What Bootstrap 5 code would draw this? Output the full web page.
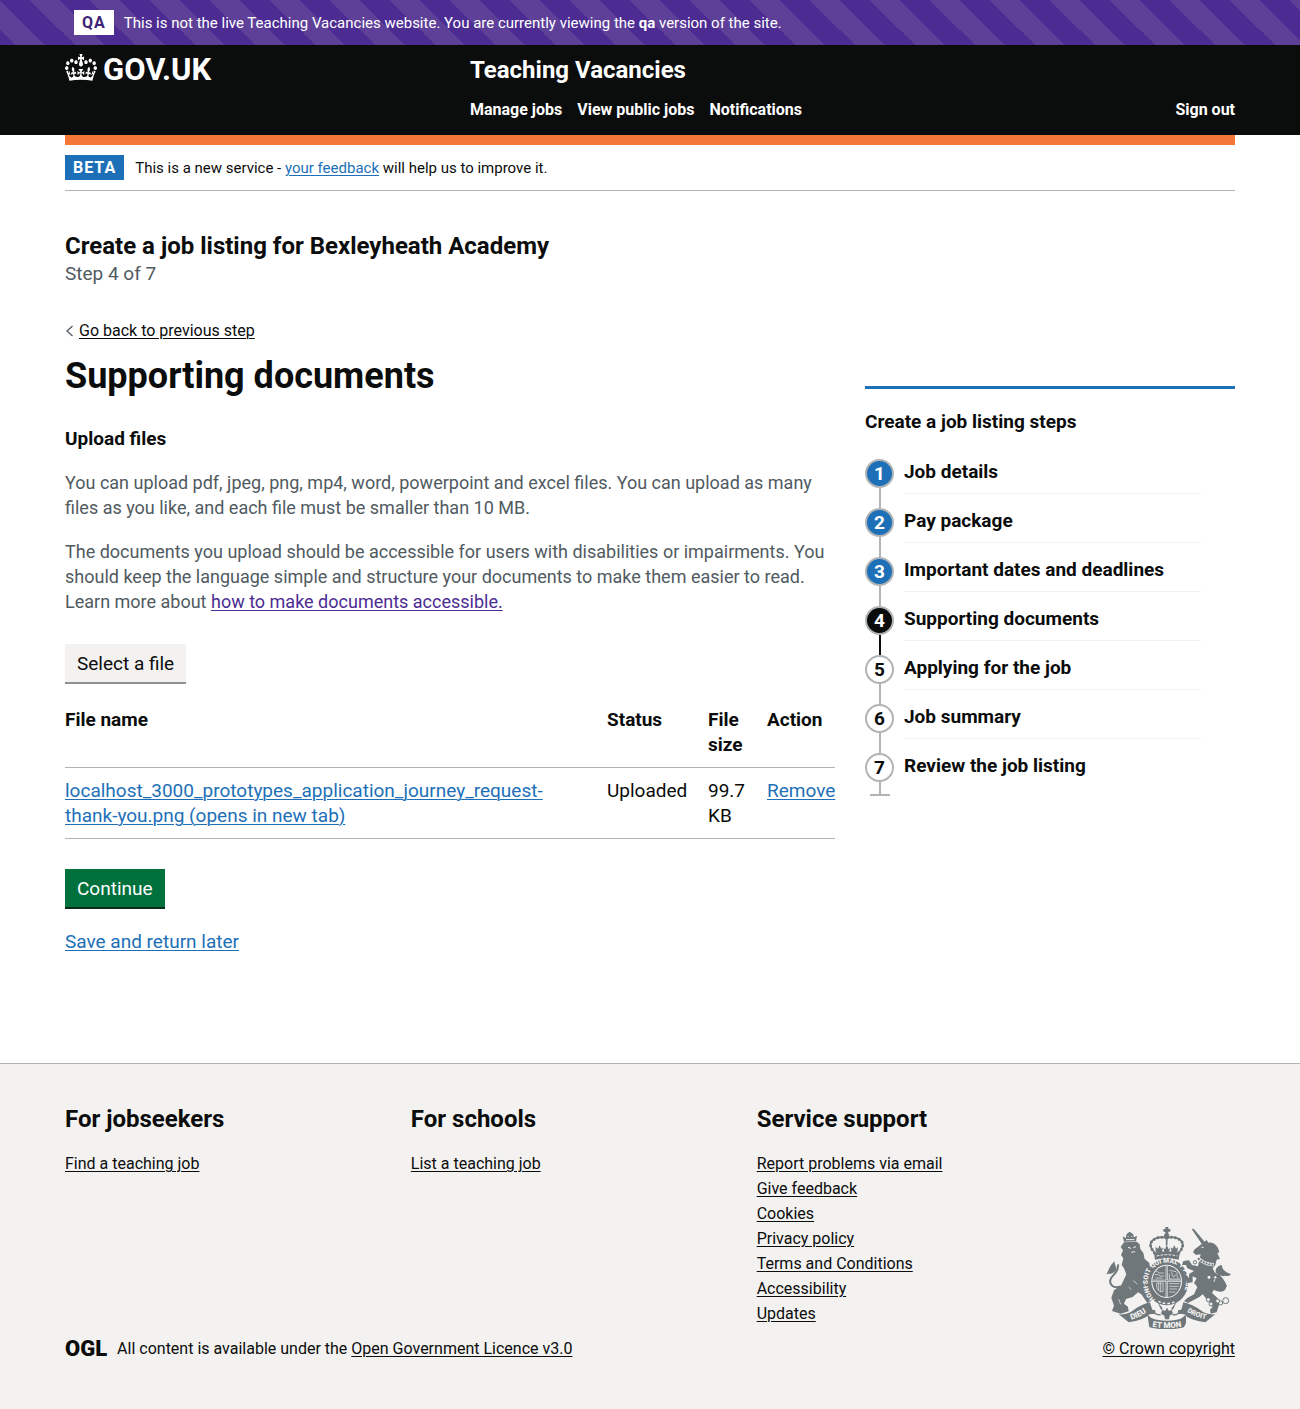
<!DOCTYPE html>
<html lang="en">
<head>
<meta charset="utf-8">
<meta name="viewport" content="width=device-width, initial-scale=1">
<title>Supporting documents - Teaching Vacancies</title>
<link href="https://cdn.jsdelivr.net/npm/bootstrap@5.3.0/dist/css/bootstrap.min.css" rel="stylesheet">
<style>
  :root { --ink: #0b0c0c; --blue: #1d70b8; --grey: #505a5f; --line: #b1b4b6; --pale: #f3f2f1; }
  body { font-family: Roboto, "Liberation Sans", sans-serif; font-size: 19px; line-height: 25px; color: var(--ink); }
  h1, h2, h3, p, ul, ol { margin: 0; }
  a { color: var(--blue); text-decoration-thickness: 1px; text-underline-offset: 2px; }
  .text-15 { font-size: 15px; line-height: 20px; }
  .text-16 { font-size: 16px; line-height: 20px; }
  .page-width { max-width: 1200px; padding-left: 15px; padding-right: 15px; }
  .head-m { font-size: 24px; line-height: 30px; font-weight: 700; }
  .head-s { font-size: 19px; line-height: 25px; font-weight: 700; }
  .head-l { font-size: 36px; line-height: 40px; font-weight: 700; margin: 15px 0 30px; }
  .grey-text { color: var(--grey); }
  .hint { color: var(--grey); font-size: 18px; margin-top: 19px; }
  .ink-link { color: var(--ink); }
  .seen-link { color: #4c2c92; }

  .env-banner { background: linear-gradient(45deg, #4c2c92 25%, #5e4099 25% 50%, #4c2c92 50% 75%, #5e4099 75%) 0 0 / 60px 60px; color: #fff; padding: 10px 0; }
  .env-banner .page-width { padding-left: 24px; gap: 10px; }
  .phase-tag { font-size: 16px; line-height: 25px; padding: 0 8px; font-weight: 700; background: var(--blue); color: #fff; letter-spacing: 1px; }
  .env-banner .phase-tag { background: #fff; color: #3d2375; }

  .site-head { background: var(--ink); height: 90px; }
  .site-head a { color: #fff; text-decoration: none; }
  .brand { font-size: 31px; line-height: 32px; font-weight: 700; gap: 6px; margin-top: 9px; }
  .head-side { padding-left: 15px; padding-top: 10px; }
  .head-side ul { gap: 15px; margin-top: 15px; font-size: 16px; font-weight: 700; line-height: 20px; }
  .brand-bar { height: 10px; background: #f47738; }
  .phase-row { gap: 11px; padding: 10px 0; border-bottom: 1px solid var(--line); }

  .intro { padding-top: 40px; margin-bottom: 35px; }
  .split { --bs-gutter-x: 30px; }
  .gov-btn { border: 0; border-bottom: 2px solid #929191; background: var(--pale); color: var(--ink); padding: 7px 12px 6px; line-height: 25px; display: block; }
  .gov-btn-go { background: #00703c; border-color: #002d18; color: #fff; }
  .pick-file { margin-top: 30px; margin-bottom: 13px; }
  .files { width: 100%; table-layout: fixed; margin-bottom: 30px; }
  .files th, .files td { padding: 10px 20px 10px 0; vertical-align: top; border-bottom: 1px solid var(--line); }
  .files th:last-child, .files td:last-child { padding-right: 0; }
  .w-status { width: 101px; } .w-size { width: 59px; } .w-action { width: 68px; }
  .files td:first-child { padding-right: 60px; }
  .save-link { margin: 20px 0 109px; }

  .steps { margin-top: 65px; border-top: 3px solid var(--blue); padding-top: 20px; }
  .steps ol { margin-top: 25px; }
  .step-item { gap: 10px; height: 49px; font-weight: 700; }
  .step-mark { width: 29px; }
  .step-num { width: 29px; height: 29px; line-height: 25px; border: 2px solid var(--line); border-radius: 50%; text-align: center; flex: none; background: #fff; }
  .step-done .step-num { background: var(--blue); color: #fff; }
  .step-now .step-num { background: var(--ink); color: #fff; }
  .step-stem { width: 2px; flex: 1; background: var(--line); }
  .step-now .step-stem { background: var(--ink); }
  .step-name { height: 35px; border-bottom: 1px solid var(--pale); margin-right: 34px; }
  .step-item:last-child { height: 43px; }
  .step-item:last-child .step-name { border: 0; }
  .step-foot { width: 20px; height: 2px; background: var(--line); }

  .site-foot { background: var(--pale); border-top: 1px solid var(--line); padding: 40px 0 50px; }
  .foot-row { gap: 30px; }
  .foot-nav { display: grid; grid-template-columns: repeat(3, 1fr); gap: 30px; }
  .foot-nav ul { margin-top: 20px; display: grid; gap: 5px; }
  .licence { gap: 10px; margin-top: 15px; }
  .ogl-mark { font-weight: 900; font-size: 22px; line-height: 20px; }
  .arms { margin-bottom: 10px; }
</style>
</head>
<body>
<div class="env-banner">
  <div class="container-fluid page-width d-flex align-items-center">
    <strong class="phase-tag">QA</strong>
    <span class="text-15">This is not the live Teaching Vacancies website. You are currently viewing the <strong>qa</strong> version of the site.</span>
  </div>
</div>

<header class="site-head">
  <div class="container-fluid page-width d-flex">
    <div class="col-4 p-0">
      <a href="#" class="brand d-inline-flex" aria-label="GOV.UK">
        <svg width="32" height="27" viewBox="0 0 132 97" preserveAspectRatio="none" fill="#fff" aria-hidden="true"><path d="M25 30.2c3.5 1.5 7.7-.2 9.1-3.7 1.5-3.6-.2-7.8-3.9-9.2-3.6-1.4-7.6.3-9.1 3.9-1.4 3.5.3 7.5 3.9 9zM9 39.5c3.6 1.5 7.8-.2 9.2-3.7 1.5-3.6-.2-7.8-3.9-9.1-3.6-1.5-7.6.2-9.1 3.8-1.4 3.5.3 7.5 3.8 9zM4.4 57.2c3.5 1.5 7.7-.2 9.1-3.8 1.5-3.6-.2-7.7-3.9-9.1-3.5-1.5-7.6.3-9.1 3.8-1.4 3.5.3 7.6 3.9 9.1zm38.3-21.4c3.5 1.5 7.7-.2 9.1-3.8 1.5-3.6-.2-7.7-3.9-9.1-3.6-1.5-7.6.3-9.1 3.8-1.3 3.6.4 7.7 3.9 9.1zm64.4-5.6c-3.6 1.5-7.8-.2-9.1-3.7-1.5-3.6.2-7.8 3.8-9.2 3.6-1.4 7.7.3 9.2 3.9 1.3 3.5-.4 7.5-3.9 9zm15.9 9.3c-3.6 1.5-7.7-.2-9.1-3.7-1.5-3.6.2-7.8 3.7-9.1 3.6-1.5 7.7.2 9.2 3.8 1.5 3.5-.3 7.5-3.8 9zm4.7 17.7c-3.6 1.5-7.8-.2-9.2-3.8-1.5-3.6.2-7.7 3.9-9.1 3.6-1.5 7.7.3 9.2 3.8 1.3 3.5-.4 7.6-3.9 9.1zM89.3 35.8c-3.6 1.5-7.8-.2-9.2-3.8-1.4-3.6.2-7.7 3.9-9.1 3.6-1.5 7.7.3 9.2 3.8 1.4 3.6-.3 7.7-3.9 9.1zM69.7 17.7l8.9 4.7V9.3l-8.9 2.8c-.2-.3-.5-.6-.9-.9L72.4 0H59.6l3.5 11.2c-.3.3-.6.5-.9.9l-8.8-2.8v13.1l8.8-4.7c.3.3.6.7.9.9l-5 15.4v.1c-.2.8-.4 1.6-.4 2.4 0 4.1 3.1 7.5 7 8.1h.2c.3 0 .7.1 1 .1.4 0 .7 0 1-.1h.2c4-.6 7.1-4.1 7.1-8.1 0-.8-.1-1.7-.4-2.4V34l-5.1-15.4c.4-.2.7-.6 1-.9zM66 92.8c16.9 0 32.8 1.1 47.1 3.2 4-16.9 8.9-26.7 14-33.5l-9.6-3.4c1 4.9 1.1 7.2 0 10.2-1.5-1.4-3-4.3-4.2-8.7L108.6 76c2.8-2 5-3.2 7.5-3.3-4.4 9.4-10 11.9-13.6 11.2-4.3-.8-6.3-4.6-5.6-7.9 1-4.7 5.7-5.9 8-.5 4.3-8.7-3-11.4-7.6-8.8 7.1-7.2 7.9-13.5 2.1-21.1-8 6.1-8.1 12.3-4.5 20.8-4.7-5.4-12.1-2.5-9.5 6.2 3.4-5.2 7.9-2 7.2 3.1-.6 4.3-6.4 7.8-13.5 7.2-10.3-.9-10.9-8-11.2-13.8 2.5-.5 7.1 1.8 11 7.3L80.2 60c-4.1 4.4-8 5.3-12.3 5.4 1.4-4.4 8-11.6 8-11.6H55.5s6.4 7.2 7.9 11.6c-4.2-.1-8-1-12.3-5.4l1.4 16.4c3.9-5.5 8.5-7.7 10.9-7.3-.3 5.8-.9 12.8-11.1 13.8-7.2.6-12.9-2.9-13.5-7.2-.7-5 3.8-8.3 7.1-3.1 2.7-8.7-4.6-11.6-9.4-6.2 3.7-8.5 3.6-14.7-4.6-20.8-5.8 7.6-5 13.9 2.2 21.1-4.7-2.6-11.9.1-7.7 8.8 2.3-5.5 7.1-4.2 8.1.5.7 3.3-1.3 7.1-5.7 7.900-3.5.7-9-1.8-13.5-11.2 2.5.1 4.7 1.3 7.5 3.3l-4.7-15.4c-1.2 4.4-2.7 7.2-4.3 8.7-1.1-3-.9-5.3 0-10.2l-9.5 3.4c5 6.9 9.900 16.7 14 33.5 14.8-2.1 30.8-3.2 47.7-3.2z"/></svg>
        <span>GOV.UK</span>
      </a>
    </div>
    <div class="col-8 head-side">
      <a href="#" class="head-m d-block">Teaching Vacancies</a>
      <nav aria-label="Account">
        <ul class="list-unstyled d-flex">
          <li><a href="#">Manage jobs</a></li>
          <li><a href="#">View public jobs</a></li>
          <li><a href="#">Notifications</a></li>
          <li class="ms-auto"><a href="#">Sign out</a></li>
        </ul>
      </nav>
    </div>
  </div>
</header>

<div class="container-fluid page-width">
  <div class="brand-bar"></div>
  <div class="phase-row d-flex align-items-center">
    <strong class="phase-tag">BETA</strong>
    <span class="text-15">This is a new service - <a href="#">your feedback</a> will help us to improve it.</span>
  </div>

  <main>
    <div class="intro">
      <h2 class="head-m">Create a job listing for Bexleyheath Academy</h2>
      <p class="grey-text">Step 4 of 7</p>
    </div>
    <div class="row split">
      <div class="col-8">
        <div class="text-16 d-flex align-items-center">
          <svg class="me-1" width="10" height="12" viewBox="0 0 10 12" fill="none" stroke="#505a5f" stroke-width="1.3" aria-hidden="true"><path d="M7.500 1 2 6l5.500 5"/></svg>
          <a href="#" class="ink-link">Go back to previous step</a>
        </div>
        <h1 class="head-l">Supporting documents</h1>
        <h2 class="head-s">Upload files</h2>
        <p class="hint">You can upload pdf, jpeg, png, mp4, word, powerpoint and excel files. You can upload as many files as you like, and each file must be smaller than 10 MB.</p>
        <p class="hint">The documents you upload should be accessible for users with disabilities or impairments. You should keep the language simple and structure your documents to make them easier to read. Learn more about <a href="#" class="seen-link">how to make documents accessible.</a></p>
        <button type="button" class="gov-btn pick-file">Select a file</button>
        <table class="files">
          <thead>
            <tr><th scope="col">File name</th><th scope="col" class="w-status">Status</th><th scope="col" class="w-size">File size</th><th scope="col" class="w-action">Action</th></tr>
          </thead>
          <tbody>
            <tr><td><a href="#">localhost_3000_prototypes_application_journey_request-<wbr>thank-you.png (opens in new tab)</a></td><td>Uploaded</td><td>99.7 KB</td><td><a href="#">Remove</a></td></tr>
          </tbody>
        </table>
        <button type="submit" class="gov-btn gov-btn-go">Continue</button>
        <p class="save-link"><a href="#">Save and return later</a></p>
      </div>
      <div class="col-4">
        <aside class="steps">
          <h2 class="head-s">Create a job listing steps</h2>
          <ol class="list-unstyled">
            <li class="step-item step-done d-flex"><div class="step-mark d-flex flex-column align-items-center"><span class="step-num">1</span><span class="step-stem"></span></div><div class="step-name flex-fill">Job details</div></li>
            <li class="step-item step-done d-flex"><div class="step-mark d-flex flex-column align-items-center"><span class="step-num">2</span><span class="step-stem"></span></div><div class="step-name flex-fill">Pay package</div></li>
            <li class="step-item step-done d-flex"><div class="step-mark d-flex flex-column align-items-center"><span class="step-num">3</span><span class="step-stem"></span></div><div class="step-name flex-fill">Important dates and deadlines</div></li>
            <li class="step-item step-now d-flex"><div class="step-mark d-flex flex-column align-items-center"><span class="step-num">4</span><span class="step-stem"></span></div><div class="step-name flex-fill">Supporting documents</div></li>
            <li class="step-item d-flex"><div class="step-mark d-flex flex-column align-items-center"><span class="step-num">5</span><span class="step-stem"></span></div><div class="step-name flex-fill">Applying for the job</div></li>
            <li class="step-item d-flex"><div class="step-mark d-flex flex-column align-items-center"><span class="step-num">6</span><span class="step-stem"></span></div><div class="step-name flex-fill">Job summary</div></li>
            <li class="step-item d-flex"><div class="step-mark d-flex flex-column align-items-center"><span class="step-num">7</span><span class="step-stem"></span><span class="step-foot"></span></div><div class="step-name flex-fill">Review the job listing</div></li>
          </ol>
        </aside>
      </div>
    </div>
  </main>
</div>

<footer class="site-foot">
  <div class="container-fluid page-width d-flex align-items-end foot-row">
    <div class="flex-fill">
      <div class="foot-nav">
        <div><h2 class="head-m">For jobseekers</h2>
          <ul class="list-unstyled text-16"><li><a href="#" class="ink-link">Find a teaching job</a></li></ul></div>
        <div><h2 class="head-m">For schools</h2>
          <ul class="list-unstyled text-16"><li><a href="#" class="ink-link">List a teaching job</a></li></ul></div>
        <div><h2 class="head-m">Service support</h2>
          <ul class="list-unstyled text-16">
            <li><a href="#" class="ink-link">Report problems via email</a></li>
            <li><a href="#" class="ink-link">Give feedback</a></li>
            <li><a href="#" class="ink-link">Cookies</a></li>
            <li><a href="#" class="ink-link">Privacy policy</a></li>
            <li><a href="#" class="ink-link">Terms and Conditions</a></li>
            <li><a href="#" class="ink-link">Accessibility</a></li>
            <li><a href="#" class="ink-link">Updates</a></li>
          </ul></div>
      </div>
      <div class="licence d-flex align-items-center text-16">
        <span class="ogl-mark">OGL</span>
        <span>All content is available under the <a href="#" class="ink-link">Open Government Licence v3.0</a></span>
      </div>
    </div>
    <a href="#" class="ink-link text-16 text-center text-nowrap">
      <svg class="arms d-block mx-auto" width="125" height="102" viewBox="36 36 375 306" fill="#6f777b" aria-hidden="true">
        <defs>
          <path id="garter" d="M184 254C156 232 154 180 178 158C200 138 238 138 260 158C284 182 280 232 252 254"/>
          <path id="scroll-l" d="M104 316Q136 310 164 287"/>
          <path id="scroll-m" d="M168 334Q219 344 270 334"/>
          <path id="scroll-r" d="M272 285Q302 308 344 314"/>
        </defs>
        <!-- lion -->
        <path d="M90 82L128 80L137 88L139 102L148 114L152 132L166 144L170 168L158 174L154 182L162 194L180 205L172 216L151 208L154 220L170 232L176 254L160 264L142 238L132 232L116 246L96 252L90 266L102 275L104 289L80 296L54 288L60 272L52 248L60 226L82 210L97 178L90 160L83 150L88 130L81 120L87 106L80 96Z"/>
        <path d="M90 80L86 64L95 69L98 57L107 50L117 57L120 67L129 62L126 79Z"/>
        <path d="M96 74H121M101 65H104M112 65H115M102 97L111 100M118 98L126 95M112 112L123 110" stroke="#f3f2f1" stroke-width="3" fill="none"/>
        <path d="M80 214C58 222 44 208 50 192C55 178 76 172 72 148" fill="none" stroke="#6f777b" stroke-width="6"/>
        <path d="M36 179C44 170 44 154 62 139C60 152 76 160 60 172C50 180 44 174 36 179Z"/>
        <path d="M118 196L130 208M104 216L112 224M74 252L80 268" stroke="#f3f2f1" stroke-width="2" fill="none"/>
        <!-- crown -->
        <path d="M216 68C186 62 164 78 171 97C173 104 179 108 183 116M220 68C250 62 272 78 265 97C263 104 257 108 253 116M218 66V90" fill="none" stroke="#6f777b" stroke-width="5"/>
        <path d="M216 68C186 62 164 78 171 97C173 104 179 108 183 116M220 68C250 62 272 78 265 97C263 104 257 108 253 116" fill="none" stroke="#6f777b" stroke-width="9" stroke-linecap="round" stroke-dasharray="0 12"/>
        <path d="M214 36H223V42H229V50H223V56H214V50H208V42H214ZM218 55a8 8 0 1 1-.1 16a8 8 0 1 1 .1-16Z"/>
        <path d="M180 114Q218 104 257 114L254 134Q218 125 183 134ZM212 112L208 100L214 102L218 88L223 102L229 100L224 112ZM186 112L184 96L192 101L197 91L202 101L207 97L204 111ZM233 111L230 97L236 101L241 91L246 101L252 96L250 112Z"/>
        <path d="M188 123Q218 115 250 123" fill="none" stroke="#f3f2f1" stroke-width="3" stroke-dasharray="8 4"/>
        <!-- garter and shield -->
        <ellipse cx="218" cy="201" rx="65" ry="70"/>
        <ellipse cx="218" cy="199" rx="46" ry="50" fill="#f3f2f1"/>
        <ellipse cx="218" cy="199" rx="43" ry="47"/>
        <path d="M218 152V246M175 197H261" stroke="#f3f2f1" stroke-width="6"/>
        <path d="M218 152V246M175 197H261" stroke="#6f777b" stroke-width="2"/>
        <path d="M186 170H191L195 174H210M182 179H194L198 183H211M184 189H206M226 166L246 170L252 176M226 176V192H258M232 172L238 186L248 178L252 190M188 204H206M188 204C186 220 194 232 207 230V204M194 204V226M200 204V230M225 206H257M226 214H254M226 222H250M226 231H244" fill="none" stroke="#f3f2f1" stroke-width="2"/>
        <path d="M193 259Q218 272 245 259" fill="none" stroke="#f3f2f1" stroke-width="4" stroke-dasharray="8 6"/>
        <text font-family="Roboto, sans-serif" font-size="20" font-weight="900" fill="#f3f2f1"><textPath href="#garter">HONI SOIT QUI MAL Y PENSE</textPath></text>
        <!-- unicorn -->
        <path d="M293 42L299 41L333 82L324 88Z"/>
        <path d="M324 86L338 75L343 83C360 80 374 96 376 112L370 114L378 132L368 134L364 150L356 160L362 172L386 190L399 214L388 226L370 228L360 224L354 234L370 248L376 266L368 292L350 296L348 284L356 276L344 260L326 238L316 246L282 264L270 258L280 249L300 238L310 216L300 204L308 190L296 184L296 202L282 204L268 188L274 176L284 190L286 176L300 168L280 160L276 150L264 150L268 138L285 136L294 150L312 154L316 134L320 118L306 120L297 112L302 103Z"/>
        <path d="M312 130Q334 150 360 149" fill="none" stroke="#f3f2f1" stroke-width="10"/>
        <path d="M312 130Q334 150 360 149" fill="none" stroke="#6f777b" stroke-width="6" stroke-dasharray="6 3"/>
        <path d="M322 96L329 98M364 186L360 200" stroke="#f3f2f1" stroke-width="3"/>
        <path d="M362 222C386 234 398 222 392 206C386 192 368 184 372 160" fill="none" stroke="#6f777b" stroke-width="6"/>
        <path d="M366 174C362 160 372 152 384 150C382 166 402 174 411 178C402 188 396 178 386 184Z"/>
        <g fill="#f3f2f1" stroke="#6f777b" stroke-width="3"><circle cx="303" cy="142" r="5"/><circle cx="345" cy="187" r="6"/><circle cx="364" cy="187" r="5"/><circle cx="343" cy="254" r="6"/><circle cx="351" cy="267" r="6"/><circle cx="371" cy="258" r="6"/><circle cx="380" cy="264" r="6"/><circle cx="395" cy="257" r="9"/></g>
        <!-- motto scroll -->
        <path d="M74 298Q102 300 118 286Q142 268 168 262L174 284L184 286V296L166 298Q150 316 104 322L92 312ZM160 298L172 309Q190 317 219 317Q248 317 264 309L276 298V324L270 337Q246 343 219 343Q190 343 166 337ZM364 298Q336 300 320 286Q296 268 268 262L262 284L252 286V296L270 298Q286 316 334 322L346 312Z"/>
        <path d="M219 278L225 288L233 284L237 296L227 302L225 313H213L211 302L201 296L205 284L213 288ZM190 260L206 280L202 286ZM248 260L232 280L236 286Z"/>
        <path d="M168 272Q174 300 200 300M270 272Q262 300 236 300" fill="none" stroke="#6f777b" stroke-width="4"/>
        <g font-family="Roboto, sans-serif" font-size="24" font-weight="900" fill="#f3f2f1" text-anchor="middle">
          <text><textPath href="#scroll-l" startOffset="50%">DIEU</textPath></text>
          <text><textPath href="#scroll-m" startOffset="50%">ET MON</textPath></text>
          <text font-size="21"><textPath href="#scroll-r" startOffset="50%">DROIT</textPath></text>
        </g>
      </svg>
      © Crown copyright
    </a>
  </div>
</footer>
<script src="https://cdn.jsdelivr.net/npm/bootstrap@5.3.0/dist/js/bootstrap.bundle.min.js"></script>
</body>
</html>
